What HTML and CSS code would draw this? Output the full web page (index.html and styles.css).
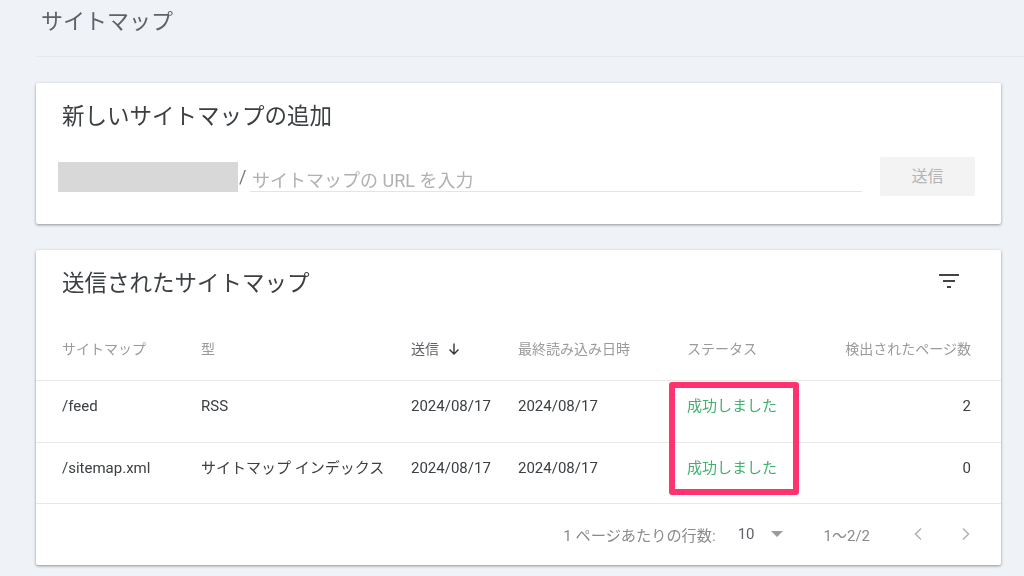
FILE: index.html
```html
<!doctype html>
<html lang="ja">
<head>
	<meta charset="UTF-8">
	<title>サイトマップ</title>
	<link rel="stylesheet" href="styles.css">
</head>
<body>
	<div class="page">
		<div class="pagehead">サイトマップ</div>

		<div class="card addcard">
			<h2 class="cardtitle">新しいサイトマップの追加</h2>
			<div class="addform">
				<div class="hidden-url"></div>
				<span class="slash">/</span>
				<input class="urlinput" type="text" placeholder="サイトマップの URL を入力">
				<div class="sendbtn">送信</div>
			</div>
		</div>

		<div class="card listcard">
			<div class="listhead">
				<h2 class="cardtitle">送信されたサイトマップ</h2>
				<svg class="filter" width="20" height="14" viewBox="0 0 20 14">
					<rect x="0" y="0" width="20" height="2" fill="#444"/>
					<rect x="4" y="6" width="12" height="2" fill="#444"/>
					<rect x="8" y="12" width="4" height="2" fill="#444"/>
				</svg>
			</div>
			<table class="maps">
				<colgroup>
					<col class="c1"><col class="c2"><col class="c3"><col class="c4"><col class="c5"><col>
				</colgroup>
				<thead>
					<tr>
						<th>サイトマップ</th>
						<th>型</th>
						<th class="sorted">送信
							<svg class="sortarrow" width="12" height="12" viewBox="0 0 12 12">
								<path d="M6 0.5V10.5M1.5 6.5L6 11L10.5 6.5" fill="none" stroke="#333" stroke-width="1.4"/>
							</svg>
						</th>
						<th>最終読み込み日時</th>
						<th>ステータス</th>
						<th class="num">検出されたページ数</th>
					</tr>
				</thead>
				<tbody>
					<tr class="first">
						<td>/feed</td>
						<td>RSS</td>
						<td>2024/08/17</td>
						<td>2024/08/17</td>
						<td class="ok">成功しました</td>
						<td class="num">2</td>
					</tr>
					<tr>
						<td>/sitemap.xml</td>
						<td>サイトマップ インデックス</td>
						<td>2024/08/17</td>
						<td>2024/08/17</td>
						<td class="ok">成功しました</td>
						<td class="num">0</td>
					</tr>
				</tbody>
			</table>
			<div class="pager">
				<span class="perpage">1 ページあたりの行数:</span>
				<span class="rows">10</span>
				<span class="caret"></span>
				<span class="range">1〜2/2</span>
				<svg class="chev" width="10" height="14" viewBox="0 0 10 14">
					<path d="M8 1.5L2.5 7L8 12.5" fill="none" stroke="#b5b5b5" stroke-width="1.6"/>
				</svg>
				<svg class="chev next" width="10" height="14" viewBox="0 0 10 14">
					<path d="M2 1.5L7.5 7L2 12.5" fill="none" stroke="#b5b5b5" stroke-width="1.6"/>
				</svg>
			</div>
			<div class="marker"></div>
		</div>
	</div>
</body>
</html>
```

FILE: styles.css
```css
html,body{
	margin: 0;
	padding: 0;
}
body{
	background: #eff2f7;
	font-family: Roboto, "Noto Sans CJK JP", sans-serif;
	color: #3c4043;
	overflow: hidden;
}
.page{
	height: 576px;
	padding: 0 0 0 36px;
	filter: blur(0.35px);
}
.pagehead{
	height: 57px;
	box-sizing: border-box;
	padding: 7px 0 0 5px;
	line-height: 30px;
	font-size: 22px;
	color: #5f6368;
	border-bottom: 1px solid #e6e8ea;
}
.card{
	width: 965px;
	background: #fff;
	border-radius: 2px;
	box-shadow: 0 1px 3px rgba(60,64,67,.55);
}
.cardtitle{
	margin: 0;
	font-size: 22.5px;
	font-weight: 400;
	line-height: 26px;
	color: #3c4043;
}
.addcard{
	margin-top: 26px;
	height: 141px;
	box-sizing: border-box;
	padding: 20px 26px 0 26px;
}
.addform{
	display: flex;
	align-items: flex-end;
	height: 39px;
	margin: 28px 0 0 -4px;
}
.hidden-url{
	width: 180px;
	height: 30px;
	margin-bottom: 4px;
	background: #d8d8d8;
}
.slash{
	width: 12px;
	padding-left: 1px;
	box-sizing: border-box;
	margin-bottom: 4px;
	font-size: 18px;
	line-height: 30px;
	color: #777;
}
.urlinput{
	flex: 1;
	min-width: 0;
	height: 20px;
	box-sizing: content-box;
	margin: 0 18px 4px 0;
	padding: 8px 0 0 2px;
	border: 0;
	border-bottom: 1px solid #e4e4e4;
	outline: none;
	font-family: inherit;
	font-size: 18px;
	line-height: 20px;
}
.urlinput::placeholder{
	color: #b0b0b0;
	opacity: 1;
}
.sendbtn{
	width: 95px;
	height: 39px;
	line-height: 39px;
	text-align: center;
	font-size: 16px;
	color: #b4b4b4;
	background: #f3f3f3;
	border-radius: 2px;
}
.listcard{
	position: relative;
	margin-top: 26px;
	height: 315px;
}
.listhead{
	display: flex;
	justify-content: space-between;
	height: 68px;
	box-sizing: border-box;
	padding: 20px 42px 0 26px;
}
.filter{
	margin-top: 4px;
}
.maps{
	width: 965px;
	table-layout: fixed;
	border-collapse: collapse;
}
.c1{ width: 165px; }
.c2{ width: 210px; }
.c3{ width: 107px; }
.c4{ width: 169px; }
.c5{ width: 157px; }
.maps th,.maps td{
	padding: 0;
	text-align: left;
	font-weight: 400;
	white-space: nowrap;
	border-bottom: 1px solid #e8e8e8;
	box-sizing: border-box;
}
.maps th{
	height: 62px;
	padding-bottom: 2px;
	font-size: 14px;
	color: #9a9a9a;
}
.maps td{
	height: 61px;
	padding-top: 15px;
	vertical-align: top;
	line-height: 20px;
	font-size: 15px;
	color: #3c4043;
}
.maps tr.first td{
	height: 62px;
}
.maps th:first-child,.maps td:first-child{
	padding-left: 26px;
}
.maps th:last-child,.maps td:last-child{
	padding-right: 30px;
	text-align: right;
}
.maps th.sorted{
	color: #5f6368;
}
.sortarrow{
	margin-left: 6px;
	vertical-align: -1px;
}
.maps td.ok{
	color: #43b070;
}
.pager{
	display: flex;
	align-items: center;
	justify-content: flex-end;
	height: 61px;
	padding-right: 30px;
	font-size: 15.2px;
	color: #8a8a8a;
}
.rows{
	margin-left: 22px;
	font-size: 15px;
	color: #5f6368;
}
.caret{
	width: 0;
	height: 0;
	margin-left: 16px;
	border-left: 6px solid transparent;
	border-right: 6px solid transparent;
	border-top: 6px solid #9a9a9a;
}
.range{
	margin-left: 41px;
	font-size: 15px;
}
.chev{
	margin-left: 43px;
}
.chev.next{
	margin-left: 38px;
}
.marker{
	position: absolute;
	left: 633px;
	top: 132px;
	width: 130px;
	height: 113px;
	box-sizing: border-box;
	border: 6px solid #ff3370;
	border-radius: 3px;
}
```
